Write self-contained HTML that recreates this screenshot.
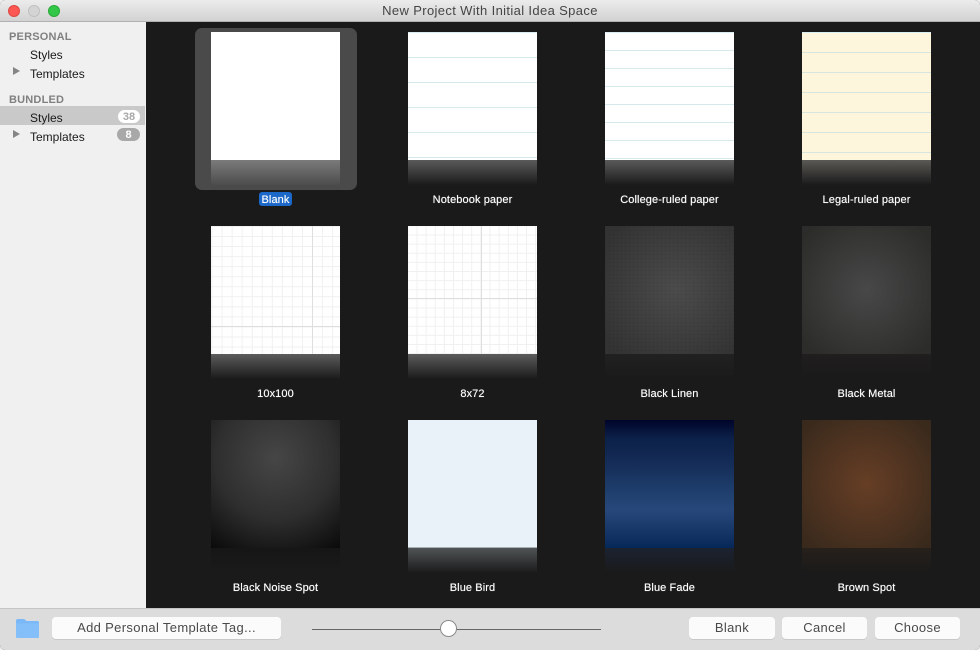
<!DOCTYPE html>
<html><head><meta charset="utf-8"><style>
html,body{margin:0;padding:0;background:#f0f0f0}
#w{position:relative;width:980px;height:650px;overflow:hidden;background:#1a1a1a;border-radius:5px;font-family:"Liberation Sans",sans-serif}
#w div{position:absolute;box-sizing:border-box}
.tb{left:0;top:0;width:980px;height:22px;background:linear-gradient(#ececec,#d2d2d2);border-bottom:1px solid #b1b1b1;text-align:center;font-size:13px;line-height:22px;color:#454545;letter-spacing:.36px}
.dot{width:12px;height:12px;border-radius:50%;top:5px}
.sb{left:0;top:22px;width:146px;height:586px;background:#f0f0f0}
.h{left:9px;font-size:11px;font-weight:bold;color:#808080;letter-spacing:.2px;line-height:14px}
.i{left:30px;font-size:12px;color:#1a1a1a;line-height:14px}
.tri{left:13px;width:0;height:0;border-left:7.5px solid #858585;border-top:4.5px solid transparent;border-bottom:4.5px solid transparent}
.badge{height:13px;border-radius:7px;font-size:11px;font-weight:bold;text-align:center;line-height:14px}
.t{width:129px;height:128px}
.r{width:129px;height:25px}
.l{width:197px;text-align:center;font-size:11px;line-height:14px;color:#fff;letter-spacing:.1px;text-shadow:0 0 .6px rgba(255,255,255,.8)}
.bar{left:0;top:608px;width:980px;height:42px;background:#dcdcdc;border-top:1px solid #c4c4c4}
.btn{top:617px;height:22px;background:#fbfbfb;border-radius:4px;box-shadow:0 1px 0 #c8c8c8;text-align:center;font-size:13px;line-height:22px;color:#4a4a4a;letter-spacing:.34px}
.lin{background-image:repeating-linear-gradient(90deg,rgba(0,0,0,.035) 0 1px,transparent 1px 4px),repeating-linear-gradient(rgba(0,0,0,.035) 0 1px,transparent 1px 4px)}
</style></head><body><div id="w">
<div class="tb">New Project With Initial Idea Space</div>
<div class="dot" style="left:8px;background:#fc5753;border:1px solid #df4744"></div>
<div class="dot" style="left:28px;background:#d4d4d4;border:1px solid #c0c0c0"></div>
<div class="dot" style="left:48px;background:#33c748;border:1px solid #27aa35"></div>

<div class="sb"></div>
<div class="h" style="top:30px">PERSONAL</div>
<div class="i" style="top:48px">Styles</div>
<div class="tri" style="top:67px"></div>
<div class="i" style="top:67px">Templates</div>
<div class="h" style="top:93px">BUNDLED</div>
<div style="left:0;top:106px;width:145px;height:19px;background:#c9c9c9"></div>
<div class="i" style="top:111px">Styles</div>
<div class="badge" style="left:118px;top:110px;width:22px;background:#fff;color:#a8a8a8">38</div>
<div class="tri" style="top:130px"></div>
<div class="i" style="top:130px">Templates</div>
<div class="badge" style="left:117px;top:128px;width:23px;background:#a8a8a8;color:#fff">8</div>

<div style="left:195px;top:28px;width:162px;height:162px;background:#4a4a4a;border-radius:7px"></div>

<!-- row 1 -->
<div class="t" style="left:211px;top:32px;background:#fff"></div>
<div class="r" style="left:211px;top:160px;background:linear-gradient(#7b7b7b,#4c4c4c)"></div>
<div style="left:259px;top:192px;width:33px;height:14px;background:#1c68c9;border-radius:3px"></div>
<div class="l" style="left:177px;top:193px">Blank</div>

<div class="t" style="left:408px;top:32px;background:#fff;border-top:1px solid #d8eef2;background-image:repeating-linear-gradient(transparent 0 24px,#d6e9ed 24px 25px)"></div>
<div class="r" style="left:408px;top:160px;background:linear-gradient(#5a5a5a,#1a1a1a)"></div>
<div class="l" style="left:374px;top:193px">Notebook paper</div>

<div class="t" style="left:605px;top:32px;background:#fff;border-top:1px solid #d8eef2;background-image:repeating-linear-gradient(transparent 0 17px,#d6e9ed 17px 18px)"></div>
<div class="r" style="left:605px;top:160px;background:linear-gradient(#5a5a5a,#1a1a1a)"></div>
<div class="l" style="left:571px;top:193px">College-ruled paper</div>

<div class="t" style="left:802px;top:32px;background:#fdf6dd;border-top:1px solid #d8eef2;background-image:repeating-linear-gradient(transparent 0 19px,#d8e4de 19px 20px)"></div>
<div class="r" style="left:802px;top:160px;background:linear-gradient(#5a5955,#1a1a1a)"></div>
<div class="l" style="left:768px;top:193px">Legal-ruled paper</div>

<!-- row 2 -->
<div class="t" style="left:211px;top:226px;background-color:#fff;background-image:linear-gradient(90deg,transparent 101px,#dedede 101px 102px,transparent 102px),linear-gradient(transparent 100px,#dedede 100px 101px,transparent 101px),linear-gradient(90deg,#f0f0f0 1px,transparent 1px),linear-gradient(#f0f0f0 1px,transparent 1px);background-size:100% 100%,100% 100%,10.05px 100%,100% 10.05px;background-position:0 0,0 0,10.6px 0,0 10px"></div>
<div class="r" style="left:211px;top:354px;background:linear-gradient(#5c5c5c,#1a1a1a)"></div>
<div class="l" style="left:177px;top:387px">10x100</div>

<div class="t" style="left:408px;top:226px;background-color:#fff;background-image:linear-gradient(90deg,transparent 73px,#dedede 73px 74px,transparent 74px),linear-gradient(transparent 72px,#dedede 72px 73px,transparent 73px),linear-gradient(90deg,#f0f0f0 1px,transparent 1px),linear-gradient(#f0f0f0 1px,transparent 1px);background-size:100% 100%,100% 100%,9.13px 100%,100% 9.13px;background-position:0 0,0 0,8.5px 0,0 8.5px"></div>
<div class="r" style="left:408px;top:354px;background:linear-gradient(#5c5c5c,#1a1a1a)"></div>
<div class="l" style="left:374px;top:387px">8x72</div>

<div class="t" style="left:605px;top:226px;background:radial-gradient(circle at 55% 50%,#4c4c4c,#333 90%)"></div>
<div class="t lin" style="left:605px;top:226px"></div>
<div class="r" style="left:605px;top:354px;background:linear-gradient(#212121,#1a1a1a)"></div>
<div class="l" style="left:571px;top:387px">Black Linen</div>

<div class="t" style="left:802px;top:226px;background:radial-gradient(circle at 50% 50%,#484848,#2c2c2a 90%)"></div>
<div class="r" style="left:802px;top:354px;background:linear-gradient(#201e1e,#1a1a1a)"></div>
<div class="l" style="left:768px;top:387px">Black Metal</div>

<!-- row 3 -->
<div class="t" style="left:211px;top:420px;background:radial-gradient(circle at 50% 30%,#464646,#2e2e2e 55%,#0a0a0a 100%)"></div>
<div class="r" style="left:211px;top:548px;background:linear-gradient(#161616,#1a1a1a)"></div>
<div class="l" style="left:177px;top:581px">Black Noise Spot</div>

<div class="t" style="left:408px;top:420px;background:#e8f2f8;border-bottom:1px solid #a8b0b4"></div>
<div class="r" style="left:408px;top:548px;background:linear-gradient(#505455,#1a1a1a)"></div>
<div class="l" style="left:374px;top:581px">Blue Bird</div>

<div class="t" style="left:605px;top:420px;background:linear-gradient(#00042a 0,#0c2048 14%,#152d58 35%,#20406f 58%,#27477b 70%,#1c3b6d 82%,#062858 100%)"></div>
<div class="r" style="left:605px;top:548px;background:linear-gradient(#1b2231,#1a1a1a)"></div>
<div class="l" style="left:571px;top:581px">Blue Fade</div>

<div class="t" style="left:802px;top:420px;background:radial-gradient(circle at 50% 50%,#663e25,#4c3220 55%,#38291c 95%)"></div>
<div class="r" style="left:802px;top:548px;background:linear-gradient(#27201b,#1a1a1a)"></div>
<div class="l" style="left:768px;top:581px">Brown Spot</div>

<!-- bottom -->
<div class="bar"></div>
<svg style="position:absolute;left:15px;top:618px" width="25" height="21" viewBox="0 0 25 21"><path d="M1 3Q1 1 3 1H8Q10 1 11 2.5L11.5 3H22.5Q24 3 24 5V18.5Q24 20 22.5 20H2.5Q1 20 1 18.5Z" fill="#7ab8f7"/><path d="M1 5.5H24V18.5Q24 20 22.5 20H2.5Q1 20 1 18.5Z" fill="#85bff9"/></svg>
<div class="btn" style="left:52px;width:229px">Add Personal Template Tag...</div>
<div style="left:312px;top:629px;width:289px;height:1px;background:#666"></div>
<div style="left:440px;top:620px;width:17px;height:17px;border-radius:50%;background:#fff;border:1px solid #8a8a8a"></div>
<div class="btn" style="left:689px;width:86px">Blank</div>
<div class="btn" style="left:782px;width:85px">Cancel</div>
<div class="btn" style="left:875px;width:85px">Choose</div>
</div></body></html>
